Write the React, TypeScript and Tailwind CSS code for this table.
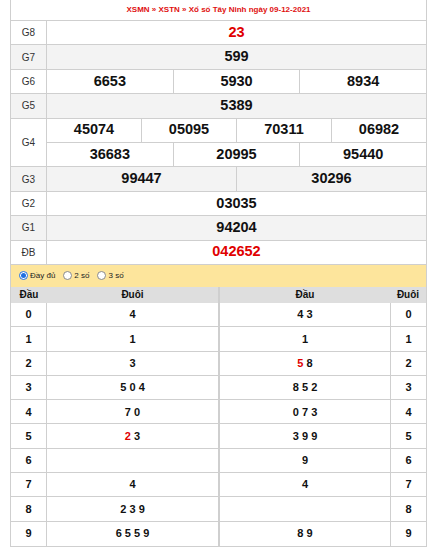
import React from "react";

const font = { fontFamily: '"Liberation Sans", Arial, sans-serif' };

type Cell = { v: string; red?: boolean };

const prizes: { label: string; rows: Cell[][]; grey?: boolean }[] = [
  { label: "G8", rows: [[{ v: "23", red: true }]] },
  { label: "G7", rows: [[{ v: "599" }]], grey: true },
  { label: "G6", rows: [[{ v: "6653" }, { v: "5930" }, { v: "8934" }]] },
  { label: "G5", rows: [[{ v: "5389" }]], grey: true },
  {
    label: "G4",
    rows: [
      [{ v: "45074" }, { v: "05095" }, { v: "70311" }, { v: "06982" }],
      [{ v: "36683" }, { v: "20995" }, { v: "95440" }],
    ],
  },
  { label: "G3", rows: [[{ v: "99447" }, { v: "30296" }]], grey: true },
  { label: "G2", rows: [[{ v: "03035" }]] },
  { label: "G1", rows: [[{ v: "94204" }]], grey: true },
  { label: "ĐB", rows: [[{ v: "042652", red: true }]] },
];

// each entry: list of digits, digit prefixed with "!" is red
const left: string[][] = [
  ["4"], ["1"], ["3"], ["5", "0", "4"], ["7", "0"], ["!2", "3"], [], ["4"], ["2", "3", "9"], ["6", "5", "5", "9"],
];
const right: string[][] = [
  ["4", "3"], ["1"], ["!5", "8"], ["8", "5", "2"], ["0", "7", "3"], ["3", "9", "9"], ["9"], ["4"], [], ["8", "9"],
];

const Digits = ({ list }: { list: string[] }) => (
  <span className="whitespace-pre">
    {list.map((d, i) => (
      <React.Fragment key={i}>
        {i > 0 && " "}
        {d.startsWith("!") ? <span className="text-[#e00000]">{d.slice(1)}</span> : d}
      </React.Fragment>
    ))}
  </span>
);

const Radio = ({ checked, label }: { checked?: boolean; label: string }) => (
  <span className="flex items-center gap-[2px] mr-[8px]">
    <span
      className={`w-[9px] h-[9px] rounded-full border flex items-center justify-center bg-white ${
        checked ? "border-[#1f6fe0]" : "border-[#8a8a8a]"
      }`}
    >
      {checked && <span className="w-[5px] h-[5px] rounded-full bg-[#1f6fe0]" />}
    </span>
    <span className="text-[8px] text-[#222]">{label}</span>
  </span>
);

export default function App() {
  return (
    <div className="w-[432px] h-[552px] bg-white overflow-hidden" style={font}>
      <div className="ml-[10px] w-[417px]">
        <div className="border-l border-r border-[#cfcfcf]">
          <div className="h-[21px] border-b border-[#cfcfcf] flex items-center justify-center text-[8px] font-bold text-[#e01010]">
            XSMN » XSTN » Xổ số Tây Ninh ngày 09-12-2021
          </div>
          {prizes.map((p) => (
            <div
              key={p.label}
              className={`flex border-b border-[#cfcfcf] ${p.rows.length > 1 ? "h-[48.8px]" : "h-[24.4px]"} ${
                p.grey ? "bg-[#f3f3f3]" : "bg-white"
              }`}
            >
              <div className="w-[35px] shrink-0 flex items-center justify-center text-[10px] text-[#333]">
                {p.label}
              </div>
              <div className="flex-1 border-l border-[#cfcfcf] flex flex-col">
                {p.rows.map((row, ri) => (
                  <div
                    key={ri}
                    className={`flex flex-1 ${ri < p.rows.length - 1 ? "border-b border-[#cfcfcf]" : ""}`}
                  >
                    {row.map((c, ci) => (
                      <div
                        key={ci}
                        className={`flex-1 basis-0 flex items-center justify-center text-[14.5px] font-bold ${
                          ci > 0 ? "border-l border-[#cfcfcf]" : ""
                        } ${c.red ? "text-[#e00000]" : "text-[#111]"}`}
                      >
                        {c.v}
                      </div>
                    ))}
                  </div>
                ))}
              </div>
            </div>
          ))}
        </div>

        <div className="h-[22px] bg-[#fde59c] border-l border-r border-[#cfcfcf] flex items-center pl-[8px]">
          <Radio checked label="Đầy đủ" />
          <Radio label="2 số" />
          <Radio label="3 số" />
        </div>

        <div className="flex">
          <div className="w-[209px] border-l border-r border-b border-[#cfcfcf]">
            <div className="h-[16px] bg-[#dedede] flex text-[10px] font-bold text-[#111]">
              <div className="w-[36px] flex items-center justify-center">Đầu</div>
              <div className="flex-1 flex items-center justify-center">Đuôi</div>
            </div>
            {left.map((l, i) => (
              <div
                key={i}
                className={`flex h-[24.3px] text-[11px] font-bold text-[#111] ${i < 9 ? "border-b border-[#cfcfcf]" : ""}`}
              >
                <div className="w-[35px] flex items-center justify-center">{i}</div>
                <div className="flex-1 border-l border-[#cfcfcf] flex items-center justify-center">
                  <Digits list={l} />
                </div>
              </div>
            ))}
          </div>
          <div className="flex-1 border-r border-b border-l border-[#cfcfcf]">
            <div className="h-[16px] bg-[#dedede] flex text-[10px] font-bold text-[#111]">
              <div className="flex-1 flex items-center justify-center">Đầu</div>
              <div className="w-[36px] flex items-center justify-center">Đuôi</div>
            </div>
            {right.map((r, i) => (
              <div
                key={i}
                className={`flex h-[24.3px] text-[11px] font-bold text-[#111] ${i < 9 ? "border-b border-[#cfcfcf]" : ""}`}
              >
                <div className="flex-1 flex items-center justify-center">
                  <Digits list={r} />
                </div>
                <div className="w-[36px] border-l border-[#cfcfcf] flex items-center justify-center">{i}</div>
              </div>
            ))}
          </div>
        </div>
      </div>
    </div>
  );
}
